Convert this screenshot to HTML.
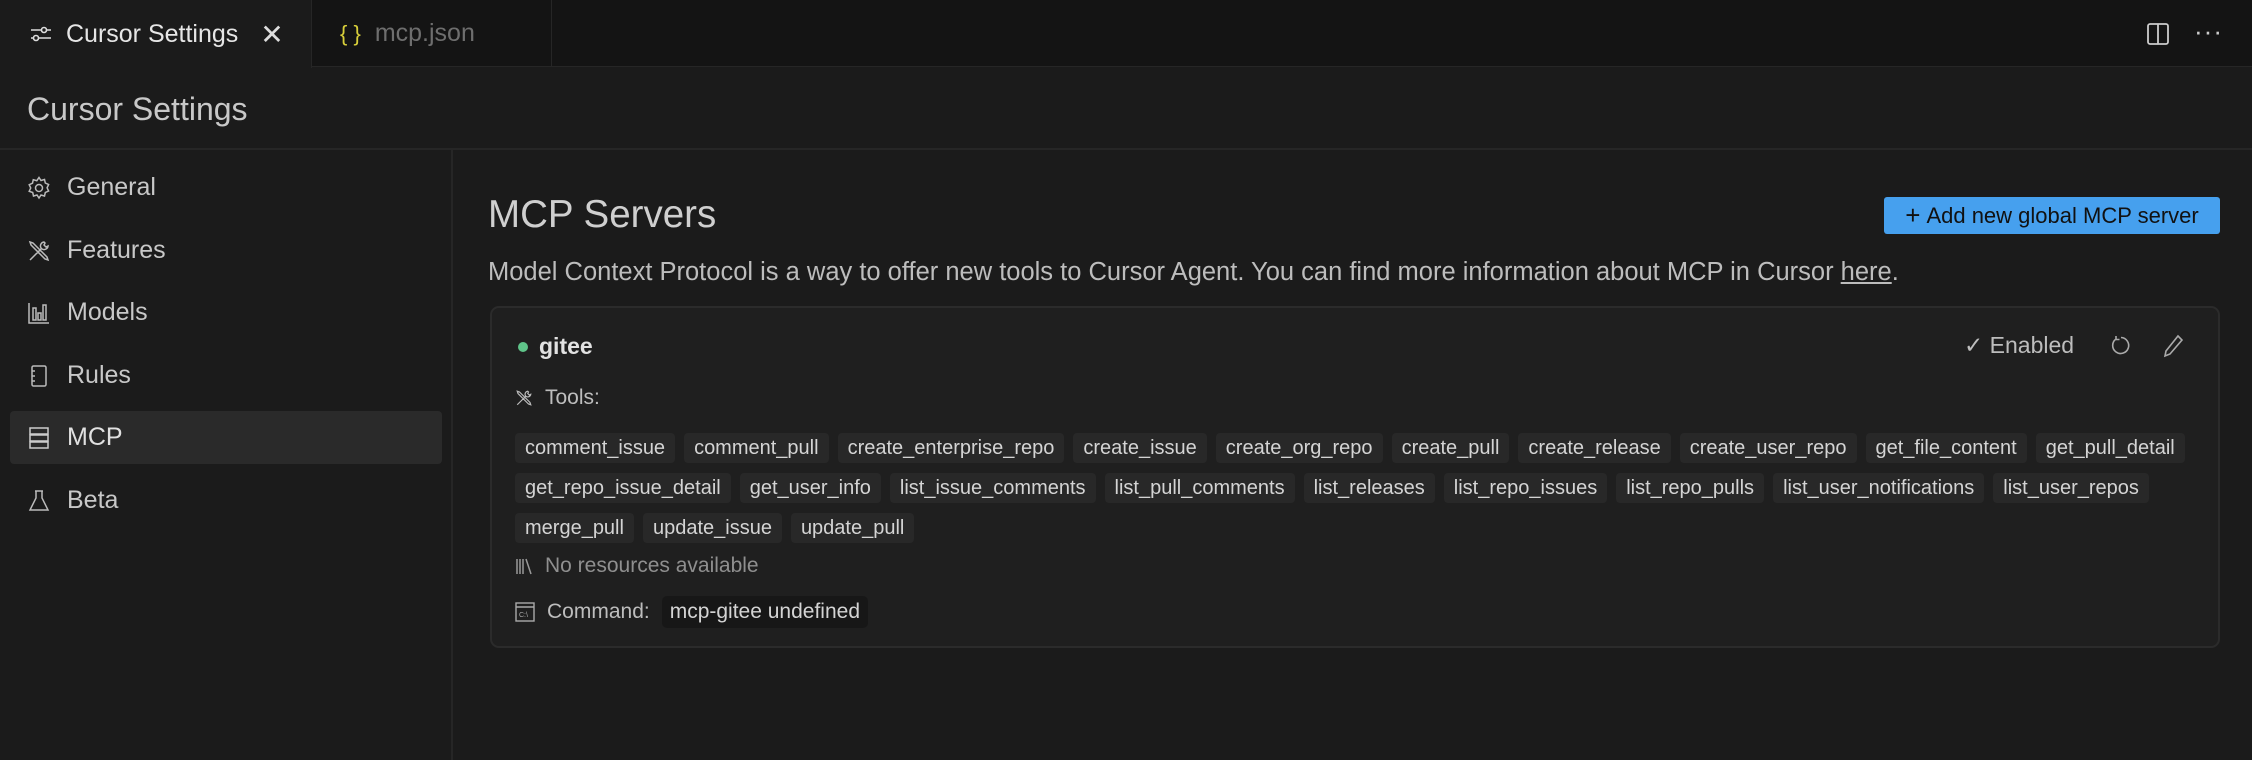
<!DOCTYPE html>
<html><head><meta charset="utf-8"><style>
*{box-sizing:border-box;margin:0;padding:0}
body{width:2252px;height:760px;background:#1b1b1b;font-family:"Liberation Sans",sans-serif;color:#cccccc;overflow:hidden;position:relative}
.tabbar{position:absolute;left:0;top:0;width:2252px;height:67px;background:#141414;border-bottom:1px solid #262626}
.tab{position:absolute;top:0;height:67px;display:flex;align-items:center;font-size:25px}
.t1{left:0;width:312px;background:#1b1b1b;color:#e6e6e6;height:68px;border-right:1px solid #262626}
.t2{left:312px;width:240px;color:#6e6e6e;border-right:1px solid #262626}
.hdr{position:absolute;left:27px;top:91px;font-size:32px;color:#c8c8c8}
.hline{position:absolute;left:0;top:148px;width:2252px;height:2px;background:#262626}
.vline{position:absolute;left:451px;top:150px;width:2px;height:610px;background:#262626}
.nav{position:absolute;left:27px;font-size:25px;color:#c8c8c8;display:flex;align-items:center}
.nav svg{margin-right:16px}
.sel{position:absolute;left:10px;top:411px;width:432px;height:53px;background:#2a2a2a;border-radius:4px}
.title{position:absolute;left:488px;top:193px;font-size:38.5px;color:#cfcfcf}
.btn{position:absolute;left:1884px;top:197px;width:336px;height:37px;background:#46a0ee;border-radius:3px;color:#111;font-size:22px;display:flex;align-items:center;justify-content:center}
.desc{position:absolute;left:488px;top:258px;font-size:25.5px;color:#bdbdbd;white-space:nowrap}
.card{position:absolute;left:490px;top:306px;width:1730px;height:342px;background:#1f1f1f;border:2px solid #2b2b2b;border-radius:9px}
.row{position:absolute;left:23px;display:flex;gap:9px;white-space:nowrap}
.chip{background:#282828;border-radius:4px;height:30px;padding:0 10px;font-size:20px;color:#d4d4d4;display:flex;align-items:center}
.lbl{position:absolute;left:23px;display:flex;align-items:center;font-size:21px;color:#bdbdbd}
</style></head><body>
<div class="tabbar">
 <div class="tab t1"><svg width="22" height="18" style="margin:0 14px 0 30px" viewBox="0 0 22 18" fill="none" stroke="#ddd" stroke-width="1.6"><line x1="1" y1="5" x2="21" y2="5"/><line x1="1" y1="13" x2="21" y2="13"/><circle cx="14" cy="5" r="2.5" fill="#1b1b1b"/><circle cx="6" cy="13" r="2.5" fill="#1b1b1b"/></svg>Cursor Settings<span style="margin-left:22px;font-size:28px;color:#ddd">✕</span></div>
 <div class="tab t2"><span style="color:#d8cf3a;margin:0 14px 0 28px;font-size:22px">{ }</span>mcp.json</div>
 <svg style="position:absolute;left:2146px;top:22px" width="24" height="24" viewBox="0 0 24 24" fill="none" stroke="#ccc" stroke-width="1.8"><rect x="2" y="2" width="20" height="20" rx="2"/><line x1="12" y1="2" x2="12" y2="22"/></svg>
 <div style="position:absolute;left:2194px;top:16px;font-size:26px;color:#ccc;letter-spacing:1px">···</div>
</div>
<div class="hdr">Cursor Settings</div>
<div class="hline"></div><div class="vline"></div>
<div class="sel"></div>
<div class="nav" style="top:173px"><svg width="24" height="24" viewBox="0 0 24 24" fill="none" stroke="#bbb" stroke-width="1.5"><circle cx="12" cy="12" r="3.5"/><path d="M12 1.5l2 3 3.5-1 .8 3.5 3.3 1.5-1.5 3.3 1.5 3.2-3.3 1.5-.8 3.5-3.5-1-2 3-2-3-3.5 1-.8-3.5L2.2 15.3 3.7 12 2.2 8.7l3.3-1.5.8-3.5 3.5 1z"/></svg>General</div>
<div class="nav" style="top:236px"><svg width="24" height="24" viewBox="0 0 24 24" fill="none" stroke="#bbb" stroke-width="1.5"><path d="M3 21L14 10M17 3a4 4 0 0 0-3 6l1 1a4 4 0 0 0 6-3l-2 1-2-2 1-2zM3 3l3 1 14 14 1 3-3-1L4 6z"/></svg>Features</div>
<div class="nav" style="top:298px"><svg width="24" height="24" viewBox="0 0 24 24" fill="none" stroke="#bbb" stroke-width="1.5"><path d="M2 2v20h20M6 7h3v12H6zM11 12h3v7h-3zM16 4h3v15h-3z"/></svg>Models</div>
<div class="nav" style="top:361px"><svg width="24" height="24" viewBox="0 0 24 24" fill="none" stroke="#bbb" stroke-width="1.5"><rect x="5" y="2" width="14" height="20" rx="1.5"/><path d="M5 7h3M5 12h3M5 17h3"/></svg>Rules</div>
<div class="nav" style="top:423px;color:#e0e0e0"><svg width="24" height="24" viewBox="0 0 24 24" fill="none" stroke="#ccc" stroke-width="1.5"><rect x="3" y="2" width="18" height="6"/><rect x="3" y="9" width="18" height="6"/><rect x="3" y="16" width="18" height="6"/></svg>MCP</div>
<div class="nav" style="top:486px"><svg width="24" height="24" viewBox="0 0 24 24" fill="none" stroke="#bbb" stroke-width="1.5"><path d="M8 2h8M9 2v7L3 21h18L15 9V2"/></svg>Beta</div>

<div class="title">MCP Servers</div>
<div class="btn"><span style="font-size:26px;margin-right:6px">+</span>Add new global MCP server</div>
<div class="desc">Model Context Protocol is a way to offer new tools to Cursor Agent. You can find more information about MCP in Cursor <u>here</u>.</div>

<div class="card">
 <div style="position:absolute;left:26px;top:34px;width:10px;height:10px;border-radius:50%;background:#5fc489"></div>
 <div style="position:absolute;left:47px;top:25px;font-size:23px;font-weight:bold;color:#e2e2e2">gitee</div>
 <div style="position:absolute;left:1472px;top:24px;font-size:23px;color:#bdbdbd">✓ Enabled</div>
 <svg style="position:absolute;left:1618px;top:27px" width="22" height="22" viewBox="0 0 22 22" fill="none" stroke="#aaa" stroke-width="1.6"><path d="M6 4a8 8 0 1 0 5-1.5M6 1v3.5h3.5"/></svg>
 <svg style="position:absolute;left:1670px;top:26px" width="22" height="24" viewBox="0 0 22 24" fill="none" stroke="#aaa" stroke-width="1.6"><path d="M16 2l4 4L8 20l-5 2 1-5z"/></svg>
 <div class="lbl" style="top:78px"><svg width="18" height="20" viewBox="0 0 24 24" fill="none" stroke="#bbb" stroke-width="1.6" style="margin-right:12px"><path d="M3 21L14 10M17 3a4 4 0 0 0-3 6l1 1a4 4 0 0 0 6-3l-2 1-2-2 1-2zM3 3l3 1 14 14 1 3-3-1L4 6z"/></svg>Tools:</div>
 <div class="row" style="top:125px"><span class="chip">comment_issue</span><span class="chip">comment_pull</span><span class="chip">create_enterprise_repo</span><span class="chip">create_issue</span><span class="chip">create_org_repo</span><span class="chip">create_pull</span><span class="chip">create_release</span><span class="chip">create_user_repo</span><span class="chip">get_file_content</span><span class="chip">get_pull_detail</span></div>
 <div class="row" style="top:165px"><span class="chip">get_repo_issue_detail</span><span class="chip">get_user_info</span><span class="chip">list_issue_comments</span><span class="chip">list_pull_comments</span><span class="chip">list_releases</span><span class="chip">list_repo_issues</span><span class="chip">list_repo_pulls</span><span class="chip">list_user_notifications</span><span class="chip">list_user_repos</span></div>
 <div class="row" style="top:205px"><span class="chip">merge_pull</span><span class="chip">update_issue</span><span class="chip">update_pull</span></div>
 <div class="lbl" style="top:246px;color:#8f8f8f"><svg width="18" height="18" viewBox="0 0 18 18" fill="none" stroke="#999" stroke-width="1.5" style="margin-right:12px"><path d="M2 2v15M5 2v15M8 2v15M11 2l5 15"/></svg>No resources available</div>
 <div class="lbl" style="top:288px"><svg width="20" height="20" viewBox="0 0 20 20" fill="none" stroke="#aaa" stroke-width="1.4" style="margin-right:12px"><rect x="1" y="1" width="18" height="18"/><line x1="1" y1="5" x2="19" y2="5"/><text x="4" y="15" font-size="7" fill="#aaa" stroke="none" font-family="Liberation Sans">C:\</text></svg>Command:<span style="margin-left:12px;background:#171717;border-radius:5px;height:32px;padding:0 8px;display:flex;align-items:center;color:#d4d4d4">mcp-gitee undefined</span></div>
</div>
</body></html>
